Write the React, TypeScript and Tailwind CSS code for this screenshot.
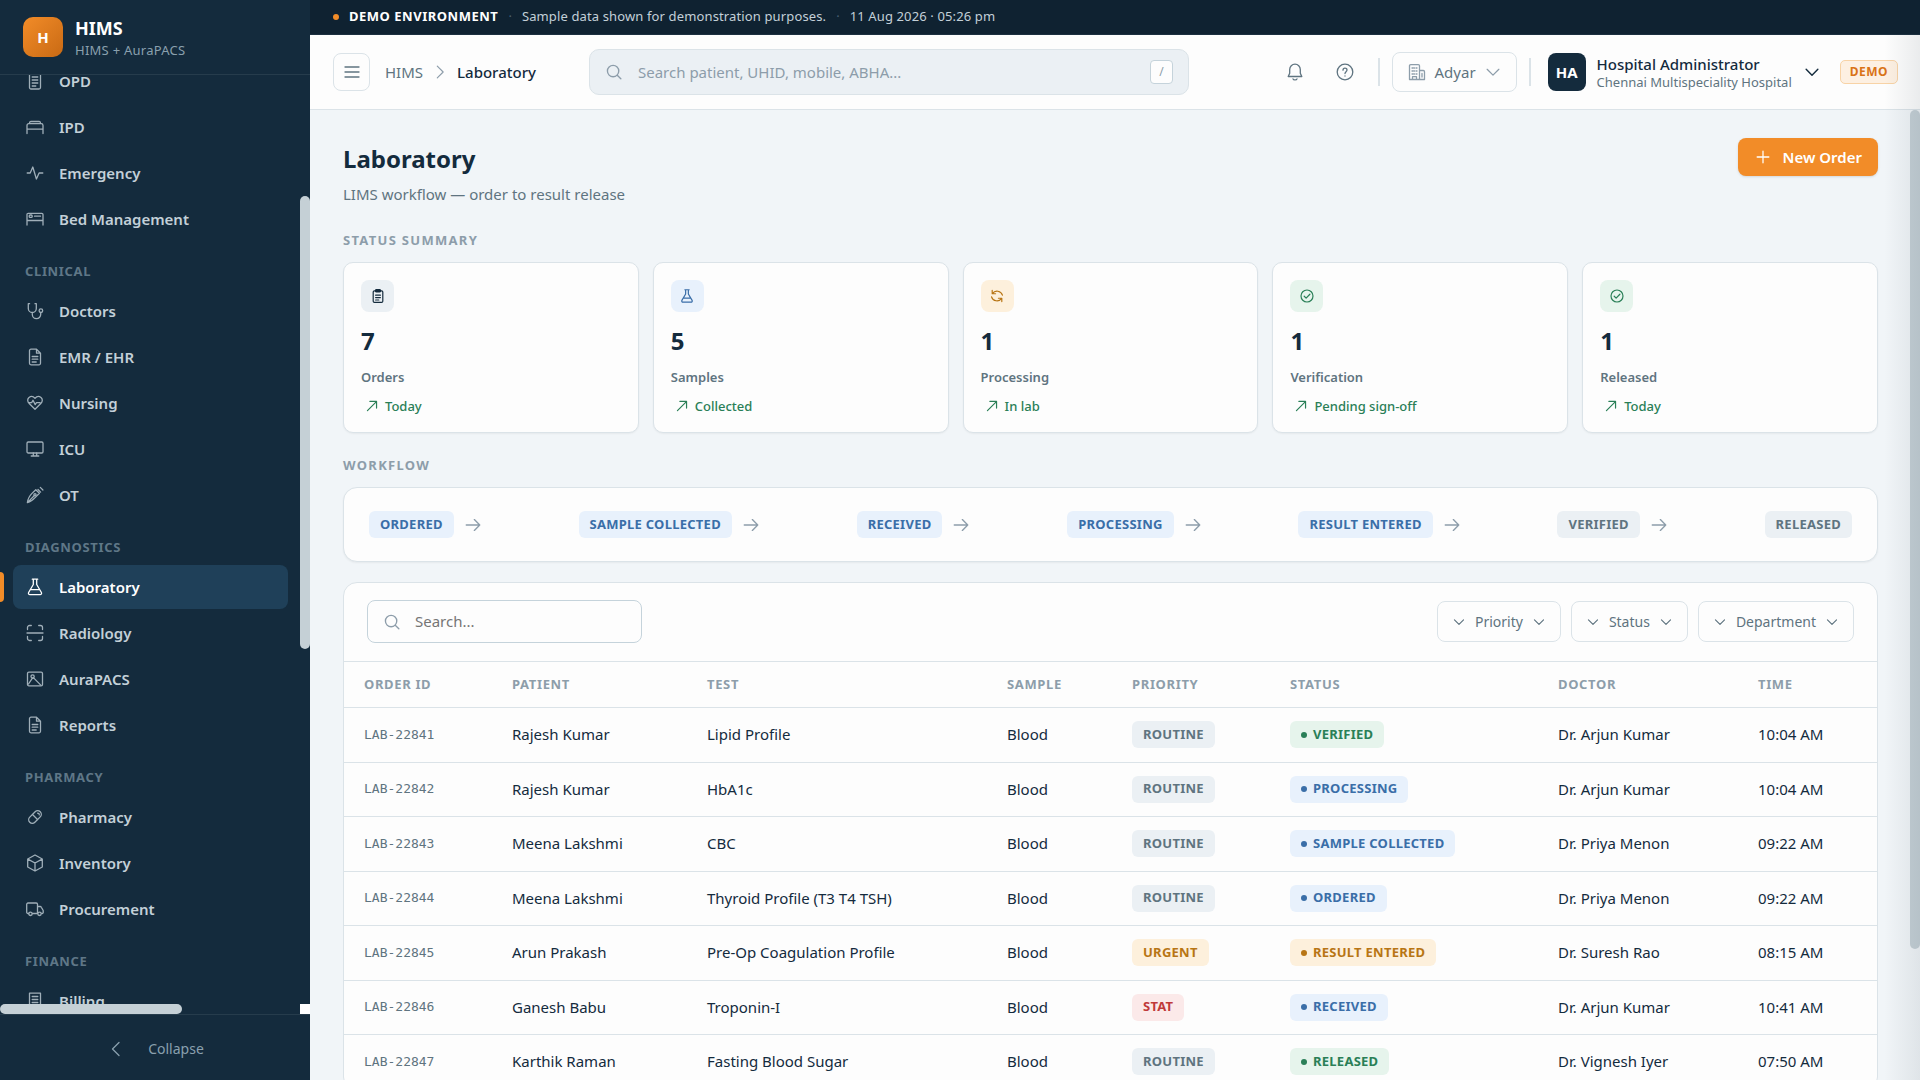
import type { ReactNode } from "react";

function Icon({ children, className = "size-5", w = 1.3 }: { children: ReactNode; className?: string; w?: number }) {
  return (
    <svg
      viewBox="0 0 20 20"
      className={`shrink-0 ${className}`}
      fill="none"
      stroke="currentColor"
      strokeWidth={w}
      strokeLinecap="round"
      strokeLinejoin="round"
      aria-hidden="true"
    >
      {children}
    </svg>
  );
}

const glyphs: Record<string, ReactNode> = {
  list: (
    <>
      <rect x="4.5" y="2" width="11" height="16" rx="1.5" />
      <path d="M7.2 6h5.6M7.2 9h5.6M7.2 12h5.6M7.2 15h3.6" />
    </>
  ),
  bed: <path d="M2 16.5V8.5a1.8 1.8 0 0 1 1.8-1.8h12.4A1.8 1.8 0 0 1 18 8.5v8M2 12.2h16M4.6 6.6v-.8A1.3 1.3 0 0 1 6 4.5h8a1.3 1.3 0 0 1 1.4 1.3v.8" />,
  pulse: <path d="M2.2 10h3L7.8 4l3.6 12 2.7-6h3.7" />,
  bedManage: (
    <>
      <path d="M2 16V5.5A1.2 1.2 0 0 1 3.2 4.3h13.6A1.2 1.2 0 0 1 18 5.5V16M2 11.5h16" />
      <rect x="4.2" y="6" width="3" height="2.4" rx="1" />
      <path d="M9.500 7.200h6" />
    </>
  ),
  stethoscope: (
    <>
      <path d="M4.600 2.700H3.300v4.800a4 4 0 0 0 8 0V2.700H10M7.300 11.500v2a4.200 4.200 0 0 0 8.400 0v-2" />
      <circle cx="15.900" cy="9.700" r="1.800" />
    </>
  ),
  document: <path d="M11.500 2.200H6A1.500 1.500 0 0 0 4.500 3.700v12.600A1.500 1.500 0 0 0 6 17.800h8a1.500 1.500 0 0 0 1.500-1.500V6.200l-4-4v4h4M7.200 9.500h5.600M7.200 12.200h5.600M7.200 15h4" />,
  heart: <path d="M10 16.300 4.200 10.500C-.2 5.800 6.200 1 10 5.200c3.800-4.200 10.200.6 5.800 5.300L10 16.300ZM3.500 9.600h3.200l1.300-2.400 2.200 4.400 1.300-2h3.500" />,
  monitor: (
    <>
      <rect x="2" y="3" width="16" height="11" rx="1.200" />
      <path d="M8.300 14v2.800M11.700 14v2.800M6.200 17h7.600" />
    </>
  ),
  scalpel: (
    <>
      <path d="M2.400 17.600c.4-3.600 1.800-6.400 4.600-9.200l3.800-3.700 3.600 3.500-3.800 3.900c-2.600 2.800-4.800 4.700-8.200 5.500ZM2.600 17.400l6.600-6.700M13 4.500l2.600 2.600M15.300 2.400l2.600 2.600" />
      <circle cx="10" cy="9.800" r="1.100" />
    </>
  ),
  flask: <path d="M7.300 2.200h5.400M8.300 2.200v5.300l-4.700 8a1.500 1.500 0 0 0 1.300 2.200h10.200a1.500 1.500 0 0 0 1.300-2.200l-4.700-8V2.200M5.500 12.700h9" />,
  scan: <path d="M2.500 6.500v-2a2 2 0 0 1 2-2h1.800M13.700 2.500h1.800a2 2 0 0 1 2 2v2M17.500 13.500v2a2 2 0 0 1-2 2h-1.800M6.300 17.500H4.500a2 2 0 0 1-2-2v-2M2 10h16" />,
  image: (
    <>
      <rect x="2.500" y="3.200" width="15" height="13.600" rx="1.400" />
      <circle cx="7.600" cy="7.400" r="1.600" />
      <path d="m3.500 15 3.400-5.200 1.700-.9 7.200 7.200" />
    </>
  ),
  pill: (
    <>
      <rect x="2.600" y="6.400" width="14.800" height="7.200" rx="3.600" transform="rotate(-45 10 10)" />
      <path d="m7.500 7.500 5 5M12.600 6.200l1.400.4.300 1.300" />
    </>
  ),
  box: <path d="m10 2 7.300 4v8L10 18l-7.300-4V6L10 2ZM2.900 6.100 10 10l7.100-3.900M10 10v7.800" />,
  truck: (
    <>
      <path d="M3.600 14.500H3A1.300 1.300 0 0 1 1.700 13.200V5.300A1.300 1.300 0 0 1 3 4h8.200a1.300 1.300 0 0 1 1.300 1.300v9.200H7.400M12.500 7.500h2.600a1.300 1.300 0 0 1 1.200.7l1.900 3.300v1.900a1 1 0 0 1-1 1.100h-.5" />
      <circle cx="5.500" cy="14.800" r="1.700" />
      <circle cx="14.500" cy="14.800" r="1.700" />
    </>
  ),
  receipt: <path d="M4.500 2.200h11v15.600l-2-1.200-1.700 1.200-1.800-1.200-1.800 1.200-1.700-1.200-2 1.200V2.200ZM7.200 5.500h5.600M7.200 8.500h5.600M7.200 11.500h5.600" />,
  search: (
    <>
      <circle cx="9" cy="9" r="6.300" />
      <path d="m13.600 13.600 4 4" />
    </>
  ),
  chevronDown: <path d="m3.500 7 6.500 6.500L16.500 7" />,
  chevronRight: <path d="m7 3.500 6.500 6.500L7 16.500" />,
  chevronLeft: <path d="M13 3.500 6.500 10l6.500 6.500" />,
  menu: <path d="M3 5h14M3 10h14M3 15h14" />,
  bell: <path d="M10 2.200a5.300 5.300 0 0 0-5.300 5.300v3.700L3.200 14.500h13.600l-1.500-3.300V7.500A5.300 5.300 0 0 0 10 2.200ZM8 16.800c.4 1.500 3.600 1.500 4 0" />,
  help: (
    <>
      <circle cx="10" cy="10" r="7.800" />
      <path d="M8 8.200C8 5.500 12 5.500 12 8c0 1.700-2 1.700-2 3.600M10 14v.1" />
    </>
  ),
  building: <path d="M2.500 17.500V3.800a1.200 1.200 0 0 1 1.200-1.200h7.600a1.200 1.200 0 0 1 1.200 1.200v13.700h-10ZM12.500 8.500h3.800a1.200 1.200 0 0 1 1.200 1.200v7.800h-5M5 6h1M9 6h1M5 9h1M9 9h1M5 12h1M9 12h1M7 6h.5M7 9h.5M7 12h.5M5.500 17.500v-2.800h4v2.800M15 11.500v3.500" />,
  plus: <path d="M10 3.500v13M3.500 10h13" />,
  clipboard: (
    <>
      <rect x="4" y="3.500" width="12" height="14.500" rx="1.500" />
      <rect x="7" y="2" width="6" height="3" rx="1" fill="currentColor" />
      <path d="M7 9h6M7 12h6M7 15h4" />
    </>
  ),
  sync: <path d="M4 3v4.200h4.200M4.300 7a7 7 0 0 1 12.500 2M16 17v-4.200h-4.200M15.700 13a7 7 0 0 1-12.500-2" />,
  check: (
    <>
      <circle cx="10" cy="10" r="7.500" />
      <path d="m6.500 10.300 2.400 2.400 4.700-4.900" />
    </>
  ),
  arrowUpRight: <path d="M3.500 16.500 16 4M7 3.500h9.500V13" />,
  arrowRight: <path d="M2.500 10h15M11.500 4l6 6-6 6" />,
};

const navGroups = [
  { title: "", items: [["OPD", "list"], ["IPD", "bed"], ["Emergency", "pulse"], ["Bed Management", "bedManage"]] },
  { title: "CLINICAL", items: [["Doctors", "stethoscope"], ["EMR / EHR", "document"], ["Nursing", "heart"], ["ICU", "monitor"], ["OT", "scalpel"]] },
  { title: "DIAGNOSTICS", items: [["Laboratory", "flask"], ["Radiology", "scan"], ["AuraPACS", "image"], ["Reports", "document"]] },
  { title: "PHARMACY", items: [["Pharmacy", "pill"], ["Inventory", "box"], ["Procurement", "truck"]] },
  { title: "FINANCE", items: [["Billing", "receipt"]] },
];

const stats = [
  { value: 7, label: "Orders", trend: "Today", icon: "clipboard", tone: "bg-[#ebf0f4] text-[#142b3d]" },
  { value: 5, label: "Samples", trend: "Collected", icon: "flask", tone: "bg-[#e8f1fc] text-[#3a6ea8]" },
  { value: 1, label: "Processing", trend: "In lab", icon: "sync", tone: "bg-[#fdf0dc] text-[#b87514]" },
  { value: 1, label: "Verification", trend: "Pending sign-off", icon: "check", tone: "bg-[#e6f4ec] text-[#2a7f57]" },
  { value: 1, label: "Released", trend: "Today", icon: "check", tone: "bg-[#e6f4ec] text-[#2a7f57]" },
];

const tones = {
  gray: "bg-[#ebf0f4] text-[#5f7480]",
  blue: "bg-[#e8f1fc] text-[#3a6ea8]",
  green: "bg-[#e6f4ec] text-[#2a7f57]",
  amber: "bg-[#fdf0dc] text-[#b87514]",
  red: "bg-[#fbe9e9] text-[#c03a3a]",
};
type Tone = keyof typeof tones;

const steps: [string, Tone][] = [
  ["ORDERED", "blue"],
  ["SAMPLE COLLECTED", "blue"],
  ["RECEIVED", "blue"],
  ["PROCESSING", "blue"],
  ["RESULT ENTERED", "blue"],
  ["VERIFIED", "gray"],
  ["RELEASED", "gray"],
];

const columns = [
  ["ORDER ID", "w-[148px]"],
  ["PATIENT", "w-[195px]"],
  ["TEST", "w-[300px]"],
  ["SAMPLE", "w-[125px]"],
  ["PRIORITY", "w-[158px]"],
  ["STATUS", "w-[268px]"],
  ["DOCTOR", "w-[200px]"],
  ["TIME", "w-[140px]"],
];

const orders: { id: string; patient: string; test: string; priority: [string, Tone]; status: [string, Tone]; doctor: string; time: string }[] = [
  { id: "LAB-22841", patient: "Rajesh Kumar", test: "Lipid Profile", priority: ["ROUTINE", "gray"], status: ["VERIFIED", "green"], doctor: "Dr. Arjun Kumar", time: "10:04 AM" },
  { id: "LAB-22842", patient: "Rajesh Kumar", test: "HbA1c", priority: ["ROUTINE", "gray"], status: ["PROCESSING", "blue"], doctor: "Dr. Arjun Kumar", time: "10:04 AM" },
  { id: "LAB-22843", patient: "Meena Lakshmi", test: "CBC", priority: ["ROUTINE", "gray"], status: ["SAMPLE COLLECTED", "blue"], doctor: "Dr. Priya Menon", time: "09:22 AM" },
  { id: "LAB-22844", patient: "Meena Lakshmi", test: "Thyroid Profile (T3 T4 TSH)", priority: ["ROUTINE", "gray"], status: ["ORDERED", "blue"], doctor: "Dr. Priya Menon", time: "09:22 AM" },
  { id: "LAB-22845", patient: "Arun Prakash", test: "Pre-Op Coagulation Profile", priority: ["URGENT", "amber"], status: ["RESULT ENTERED", "amber"], doctor: "Dr. Suresh Rao", time: "08:15 AM" },
  { id: "LAB-22846", patient: "Ganesh Babu", test: "Troponin-I", priority: ["STAT", "red"], status: ["RECEIVED", "blue"], doctor: "Dr. Arjun Kumar", time: "10:41 AM" },
  { id: "LAB-22847", patient: "Karthik Raman", test: "Fasting Blood Sugar", priority: ["ROUTINE", "gray"], status: ["RELEASED", "green"], doctor: "Dr. Vignesh Iyer", time: "07:50 AM" },
];

function Badge({ label, tone, dot = false }: { label: string; tone: Tone; dot?: boolean }) {
  return (
    <span className={`inline-flex h-[27px] items-center gap-1.5 rounded-md px-[11px] text-[13px] font-bold tracking-[0.02em] whitespace-nowrap ${tones[tone]}`}>
      {dot && <span className="size-[6px] rounded-full bg-current" />}
      {label}
    </span>
  );
}

function Sidebar() {
  return (
    <aside className="flex w-[310px] shrink-0 flex-col bg-[#142b3d]">
      <div className="flex h-[75px] shrink-0 items-center gap-3 border-b border-[#263c4c] px-[23px]">
        <div className="grid size-10 place-items-center rounded-[10px] bg-linear-to-br from-[#f28c28] to-[#c96a14] text-[15px] font-bold text-white">H</div>
        <div className="pt-0.5">
          <div className="text-lg leading-6 font-bold text-white">HIMS</div>
          <div className="text-[13px] leading-5 tracking-[0.02em] text-[#8aa0ae]">HIMS + AuraPACS</div>
        </div>
      </div>
      <div className="relative min-h-0 flex-1 overflow-hidden">
        <nav aria-label="Main" className="-mt-4">
          {navGroups.map((g) => (
            <div key={g.title}>
              {g.title && <h2 className="flex h-[46px] items-end px-[25px] pb-2 text-[13px] leading-5 font-bold tracking-[0.05em] text-[#5f7787]">{g.title}</h2>}
              {g.items.map(([label, icon]) => {
                const active = label === "Laboratory";
                return (
                  <a
                    key={label}
                    href="#"
                    aria-current={active ? "page" : undefined}
                    className={`relative mr-[22px] mb-0.5 ml-[13px] flex h-11 items-center gap-3.5 rounded-lg px-3 text-[15px] font-semibold ${active ? "bg-[#1f4059] text-white" : "text-[#c3d0d8]"}`}
                  >
                    {active && <span className="absolute top-[7px] -left-[13px] h-[30px] w-1 rounded-r bg-[#f28c28]" />}
                    <Icon className={active ? "size-5" : "size-5 opacity-80"}>{glyphs[icon]}</Icon>
                    {label}
                  </a>
                );
              })}
            </div>
          ))}
        </nav>
        <div className="absolute top-[121px] right-0 h-[453px] w-2.5 rounded-full bg-[#c5d0d6]" />
        <div className="absolute bottom-0 left-0 h-2.5 w-[182px] rounded-full bg-[#c5d0d6]" />
        <div className="absolute right-0 bottom-0 size-2.5 bg-white" />
      </div>
      <button type="button" className="flex h-[66px] shrink-0 items-center justify-center gap-[22px] border-t border-[#263c4c] pt-0.5 text-sm text-[#8aa0ae]">
        <Icon>{glyphs.chevronLeft}</Icon>
        Collapse
      </button>
    </aside>
  );
}

function Header() {
  return (
    <header className="flex h-[75px] shrink-0 items-center border-b border-[#dbe3e8] bg-[#fdfdfd] pr-[22px] pl-[23px]">
      <button type="button" aria-label="Toggle menu" className="grid h-[38px] w-[37px] place-items-center rounded-lg border border-[#dbe3e8] text-[#5f7480]">
        <Icon className="size-5">{glyphs.menu}</Icon>
      </button>
      <nav aria-label="Breadcrumb" className="ml-[15px] flex w-[204px] items-center gap-2 text-[15px]">
        <a href="#" className="text-[#5f7480]">HIMS</a>
        <Icon className="size-[18px] text-[#8d9daa]">{glyphs.chevronRight}</Icon>
        <span className="font-medium text-[#142b3d]">Laboratory</span>
      </nav>
      <label className="flex h-[46px] w-[600px] items-center gap-[15px] rounded-[10px] border border-[#dbe3e8] bg-[#ebf0f4] px-[15px]">
        <Icon className="size-[18px] text-[#8d9daa]" w={1.5}>{glyphs.search}</Icon>
        <input aria-label="Search patients" placeholder="Search patient, UHID, mobile, ABHA..." className="min-w-0 flex-1 text-[15px] outline-none placeholder:text-[#8d9daa]" />
        <kbd className="grid h-6 w-[23px] place-items-center rounded border border-[#c5d3db] bg-[#fdfdfd] font-['Noto_Sans',sans-serif] text-xs text-[#8d9daa]">/</kbd>
      </label>
      <div className="ml-auto flex items-center">
        <div className="flex gap-[30px] text-[#5f7480]">
          <button type="button" aria-label="Notifications"><Icon>{glyphs.bell}</Icon></button>
          <button type="button" aria-label="Help"><Icon>{glyphs.help}</Icon></button>
        </div>
        <div className="mr-3 ml-[23px] h-7 w-0.5 bg-[#dbe3e8]" />
        <button type="button" className="flex h-10 items-center gap-2 rounded-lg border border-[#dbe3e8] px-3.5 text-[15px] text-[#5f7480]">
          <Icon className="size-5 text-[#8d9daa]">{glyphs.building}</Icon>
          Adyar
          <Icon className="size-[18px] text-[#8d9daa]" w={1.4}>{glyphs.chevronDown}</Icon>
        </button>
        <div className="mr-[17px] ml-3 h-7 w-0.5 bg-[#dbe3e8]" />
        <button type="button" className="flex items-center gap-[11px] text-left">
          <span className="grid size-[38px] place-items-center rounded-lg bg-[#142b3d] text-[15px] font-bold text-white">HA</span>
          <span>
            <span className="block text-[15px] leading-5 font-medium text-[#142b3d]">Hospital Administrator</span>
            <span className="block text-[13px] leading-[17px] text-[#5f7480]">Chennai Multispeciality Hospital</span>
          </span>
          <Icon className="size-[18px] text-[#142b3d]" w={1.6}>{glyphs.chevronDown}</Icon>
        </button>
        <span className="ml-[19px] rounded-[5px] border border-[#f8d3a6] bg-[#fdf0e2] px-[9px] text-xs leading-[22px] font-bold tracking-[0.04em] text-[#d97316]">DEMO</span>
      </div>
    </header>
  );
}

function SectionTitle({ children }: { children: ReactNode }) {
  return <h2 className="text-[13px] leading-5 font-bold tracking-[0.1em] text-[#8d9daa]">{children}</h2>;
}

export default function App() {
  return (
    <div className="relative flex h-screen overflow-hidden bg-[#f1f5f8] font-['Noto_Sans',sans-serif] text-[#142b3d]">
      <Sidebar />
      <div className="flex min-w-0 flex-1 flex-col">
        <div className="flex h-[35px] shrink-0 items-center gap-2.5 border-b border-[#1c3040] bg-[#0f2231] px-[23px] text-[13px] text-[#c3d0d8]">
          <span className="size-1.5 rounded-full bg-[#f28c28]" />
          <strong className="font-bold tracking-[0.04em] text-white">DEMO ENVIRONMENT</strong>
          <span className="text-[#4a6071]">·</span>
          <span className="tracking-[0.01em]">Sample data shown for demonstration purposes.</span>
          <span className="text-[#4a6071]">·</span>
          <span className="tracking-[0.01em]">11 Aug 2026 · 05:26 pm</span>
        </div>
        <Header />
        <div className="relative flex min-h-0 flex-1 flex-col overflow-hidden">
          <main className="pr-[42px] pl-[33px]">
            <div className="flex items-start justify-between pt-7">
              <div>
                <h1 className="mt-[3px] text-2xl leading-9 font-bold">Laboratory</h1>
                <p className="mt-[5px] text-[15px] leading-6 text-[#5f7480]">LIMS workflow — order to result release</p>
              </div>
              <button type="button" className="flex h-[38px] items-center gap-[11px] rounded-lg bg-[#f28c28] px-4 text-[15px] font-semibold text-white shadow-sm">
                <Icon className="size-[18px]" w={1.4}>{glyphs.plus}</Icon>
                New Order
              </button>
            </div>

            <div className="mt-6 mb-3">
              <SectionTitle>STATUS SUMMARY</SectionTitle>
            </div>
            <section className="grid grid-cols-5 gap-3.5">
              {stats.map((s) => (
                <article key={s.label} className="h-[171px] rounded-[10px] border border-[#dbe3e8] bg-[#fdfdfd] p-[17px] shadow-xs">
                  <div className={`grid h-8 w-[33px] place-items-center rounded-lg ${s.tone}`}>
                    <Icon className="size-4" w={1.5}>{glyphs[s.icon]}</Icon>
                  </div>
                  <div className="mt-[11px] text-2xl leading-9 font-bold">{s.value}</div>
                  <div className="mt-2 text-[13px] leading-5 font-semibold text-[#5f7480]">{s.label}</div>
                  <div className="mt-[9px] flex items-center gap-1.5 pl-1 text-[13px] leading-5 font-medium text-[#2a7f57]">
                    <Icon className="size-3.5" w={1.7}>{glyphs.arrowUpRight}</Icon>
                    {s.trend}
                  </div>
                </article>
              ))}
            </section>

            <div className="mt-[22px] mb-3">
              <SectionTitle>WORKFLOW</SectionTitle>
            </div>
            <section className="rounded-[14px] border border-[#dbe3e8] bg-[#fdfdfd] px-[25px] py-[23px] shadow-xs">
              <ol className="flex justify-between">
                {steps.map(([label, tone], i) => (
                  <li key={label} className="flex items-center gap-2.5">
                    <Badge label={label} tone={tone} />
                    {i < steps.length - 1 && <Icon className="size-[18px] text-[#8d9daa]" w={1.5}>{glyphs.arrowRight}</Icon>}
                  </li>
                ))}
              </ol>
            </section>

            <section className="mt-5 overflow-hidden rounded-[14px] border border-[#dbe3e8] bg-[#fdfdfd]">
              <div className="flex h-[79px] items-center justify-between border-b border-[#dbe3e8] px-[23px] pb-px">
                <label className="flex h-[43px] w-[275px] items-center gap-3.5 rounded-lg border border-[#c5d3db] px-[15px]">
                  <Icon className="size-[18px] text-[#8d9daa]" w={1.5}>{glyphs.search}</Icon>
                  <input aria-label="Search orders" placeholder="Search..." className="min-w-0 flex-1 text-[15px] outline-none placeholder:text-[#757575]" />
                </label>
                <div className="flex gap-2.5">
                  {["Priority", "Status", "Department"].map((f) => (
                    <button key={f} type="button" className="flex h-[41px] items-center gap-[9px] rounded-lg border border-[#dbe3e8] px-3.5 text-sm text-[#5f7480]">
                      <Icon className="size-3.5" w={1.7}>{glyphs.chevronDown}</Icon>
                      {f}
                      <Icon className="size-3.5" w={1.7}>{glyphs.chevronDown}</Icon>
                    </button>
                  ))}
                </div>
              </div>
              <table className="w-full table-fixed text-left text-[15px]">
                <thead>
                  <tr className="h-[45px] border-b border-[#dbe3e8]">
                    {columns.map(([c, w]) => (
                      <th key={c} className={`pl-5 text-[13px] font-bold tracking-[0.05em] text-[#8d9daa] ${w}`}>{c}</th>
                    ))}
                  </tr>
                </thead>
                <tbody>
                  {orders.map((o) => (
                    <tr key={o.id} className="border-b border-[#dbe3e8] odd:h-[55px] even:h-[54px]">
                      <td className="pl-5 font-['DejaVu_Sans_Mono',monospace] text-[13px] text-[#5f7480]">{o.id}</td>
                      <td className="pl-5">{o.patient}</td>
                      <td className="pl-5">{o.test}</td>
                      <td className="pl-5">Blood</td>
                      <td className="pl-5"><div className="flex"><Badge label={o.priority[0]} tone={o.priority[1]} /></div></td>
                      <td className="pl-5"><div className="flex"><Badge label={o.status[0]} tone={o.status[1]} dot /></div></td>
                      <td className="pl-5">{o.doctor}</td>
                      <td className="pl-5">{o.time}</td>
                    </tr>
                  ))}
                </tbody>
              </table>
            </section>
          </main>
          <div className="absolute top-0 right-0 h-[839px] w-2.5 rounded-full bg-[#c5d0d6]" />
        </div>
      </div>
      <div className="pointer-events-none absolute inset-y-0 right-0 w-9 bg-linear-to-r from-transparent to-[#0f2231]/8" />
    </div>
  );
}
